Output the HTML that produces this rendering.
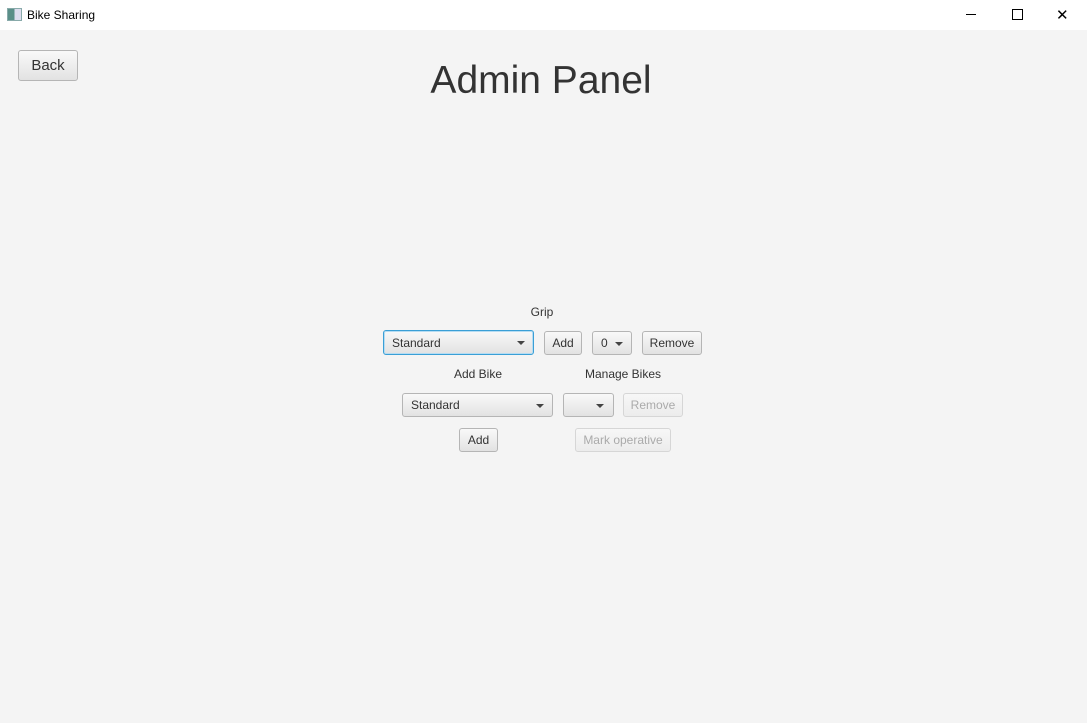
<!DOCTYPE html>
<html><head><style>
body{margin:0;width:1087px;height:723px;background:#f4f4f4;font-family:"Liberation Sans",sans-serif;position:relative;overflow:hidden}
.tb{position:absolute;left:0;top:0;width:1087px;height:30px;background:#fff}
.a{position:absolute}
.btn{position:absolute;box-sizing:border-box;border:1px solid #b5b5b5;border-radius:3px;background:linear-gradient(#f9f9f9,#e2e2e2);font-size:12px;color:#333;display:flex;align-items:center;justify-content:center}
.dis{color:#aaa;border-color:#d6d6d6;background:linear-gradient(#f7f7f7,#ececec)}
.cb{justify-content:flex-start;padding-left:8px}
.arr{position:absolute;right:8px;top:10px;width:0;height:0;border-left:4px solid transparent;border-right:4px solid transparent;border-top:4px solid #444}
.lbl{position:absolute;font-size:12px;color:#333;transform:translateX(-50%);white-space:nowrap}
</style></head><body>
<div class="tb">
<div class="a" style="left:7px;top:8px;width:13px;height:11px;border:1px solid #8aa;background:linear-gradient(90deg,#5a8f88 50%,#dde 50%)"></div>
<div class="a" style="left:27px;top:8px;font-size:12px;color:#000">Bike Sharing</div>
<div class="a" style="left:966px;top:14px;width:10px;height:1px;background:#000"></div>
<div class="a" style="left:1012px;top:9px;width:9px;height:9px;border:1px solid #000"></div>
<div class="a" style="left:1056px;top:6px;font-size:15px;color:#000">✕</div>
</div>
<div class="btn" style="left:18px;top:50px;width:60px;height:31px;font-size:15px">Back</div>
<div class="lbl" style="left:541px;top:59px;font-size:39px;color:#333">Admin Panel</div>
<div class="lbl" style="left:542px;top:305px">Grip</div>
<div class="btn cb" style="left:383px;top:330px;width:151px;height:25px;border:1px solid #3a9fd6;box-shadow:0 0 0 1px #b6dcf2 inset">Standard<span class="arr"></span></div>
<div class="btn" style="left:544px;top:331px;width:38px;height:24px">Add</div>
<div class="btn cb" style="left:592px;top:331px;width:40px;height:24px">0<span class="arr"></span></div>
<div class="btn" style="left:642px;top:331px;width:60px;height:24px">Remove</div>
<div class="lbl" style="left:478px;top:367px">Add Bike</div>
<div class="lbl" style="left:623px;top:367px">Manage Bikes</div>
<div class="btn cb" style="left:402px;top:393px;width:151px;height:24px">Standard<span class="arr"></span></div>
<div class="btn cb" style="left:563px;top:393px;width:51px;height:24px"><span class="arr" style="right:9px"></span></div>
<div class="btn dis" style="left:623px;top:393px;width:60px;height:24px">Remove</div>
<div class="btn" style="left:459px;top:428px;width:39px;height:24px">Add</div>
<div class="btn dis" style="left:575px;top:428px;width:96px;height:24px">Mark operative</div>
</body></html>
